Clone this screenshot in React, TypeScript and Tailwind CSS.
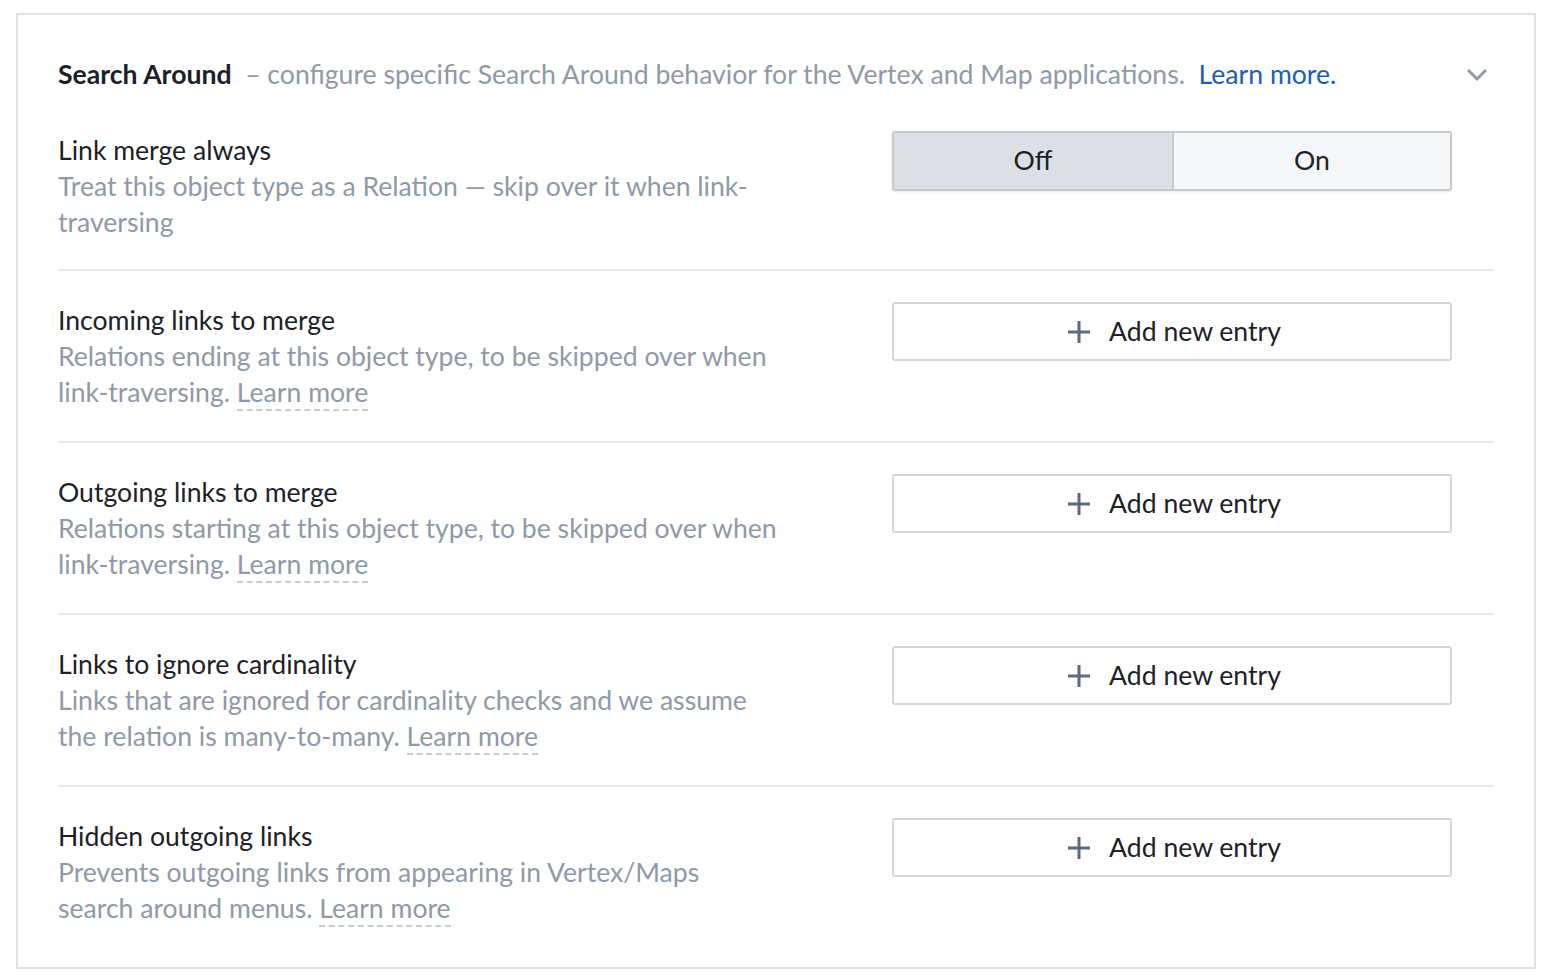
import React from "react";

const font = { fontFamily: "Lato, 'Noto Sans', sans-serif" };

function LearnMore() {
  return (
    <span className="border-b-2 border-dashed border-[#c5cbd3] pb-[1px]">Learn more</span>
  );
}

function AddButton() {
  return (
    <button className="flex h-[59px] w-[560px] items-center justify-center gap-[18px] rounded-[3px] border-2 border-[#d3d6da] bg-white pl-[4px] text-[26.6px] text-[#1c2127]">
      <svg width="24" height="24" viewBox="0 0 24 24">
        <path d="M12 1v22M1 12h22" stroke="#5f6b7c" strokeWidth="3" strokeLinecap="butt" />
      </svg>
      <span>Add new entry</span>
    </button>
  );
}

function Toggle() {
  return (
    <div className="-mt-[1px] flex h-[60px] w-[560px] overflow-hidden rounded-[3px] border-2 border-[#c7cacd] text-[26.6px] text-[#1c2127] shadow-[0_1px_2px_rgba(0,0,0,0.08)]">
      <div className="flex w-[280px] items-center justify-center border-r-2 border-[#c7cacd] bg-[#dcdfe3]">Off</div>
      <div className="flex flex-1 items-center justify-center bg-[#f5f6f8]">On</div>
    </div>
  );
}

type RowProps = {
  title: string;
  lines: React.ReactNode[];
  control: React.ReactNode;
  last?: boolean;
  first?: boolean;
};

function Row({ title, lines, control, last, first }: RowProps) {
  return (
    <div className={`flex items-start justify-between ${first ? "pt-[40px] pb-[29px]" : "pt-[31px] pb-[31px]"} ${last ? "" : "border-b-2 border-[#e5e8eb]"}`}>
      <div className="leading-[36px] text-[26.6px]">
        <div className="text-[#1c2127]">{title}</div>
        {lines.map((l, i) => (
          <div key={i} className="whitespace-nowrap text-[#8f99a8]">{l}</div>
        ))}
      </div>
      <div className="mr-[42px]">{control}</div>
    </div>
  );
}

export default function App() {
  return (
    <div className="min-h-[980px] bg-white pt-[13px] pl-[16px]" style={font}>
      <div className="w-[1520px] border-2 border-[#dfe2e6] px-[40px] pt-[41px] pb-[10px]">
        <div className="flex items-center justify-between leading-[36px] text-[26.6px]">
          <div className="whitespace-pre">
            <span className="font-bold text-[#1c2127]">Search Around</span>
            <span className="text-[#8f99a8]">{"  – configure specific Search Around behavior for the Vertex and Map applications.  "}</span>
            <span className="text-[#215db0]">Learn more.</span>
          </div>
          <svg width="22" height="14" viewBox="0 0 22 14" className="mr-[6px] mt-[2px]">
            <path d="M2 2l9 9 9-9" fill="none" stroke="#8f99a8" strokeWidth="3" />
          </svg>
        </div>
        <Row
          first
          title="Link merge always"
          lines={["Treat this object type as a Relation — skip over it when link-", "traversing"]}
          control={<Toggle />}
        />
        <Row
          title="Incoming links to merge"
          lines={[
            "Relations ending at this object type, to be skipped over when",
            <>link-traversing. <LearnMore /></>,
          ]}
          control={<AddButton />}
        />
        <Row
          title="Outgoing links to merge"
          lines={[
            "Relations starting at this object type, to be skipped over when",
            <>link-traversing. <LearnMore /></>,
          ]}
          control={<AddButton />}
        />
        <Row
          title="Links to ignore cardinality"
          lines={[
            "Links that are ignored for cardinality checks and we assume",
            <>the relation is many-to-many. <LearnMore /></>,
          ]}
          control={<AddButton />}
        />
        <Row
          last
          title="Hidden outgoing links"
          lines={[
            "Prevents outgoing links from appearing in Vertex/Maps",
            <>search around menus. <LearnMore /></>,
          ]}
          control={<AddButton />}
        />
      </div>
    </div>
  );
}
